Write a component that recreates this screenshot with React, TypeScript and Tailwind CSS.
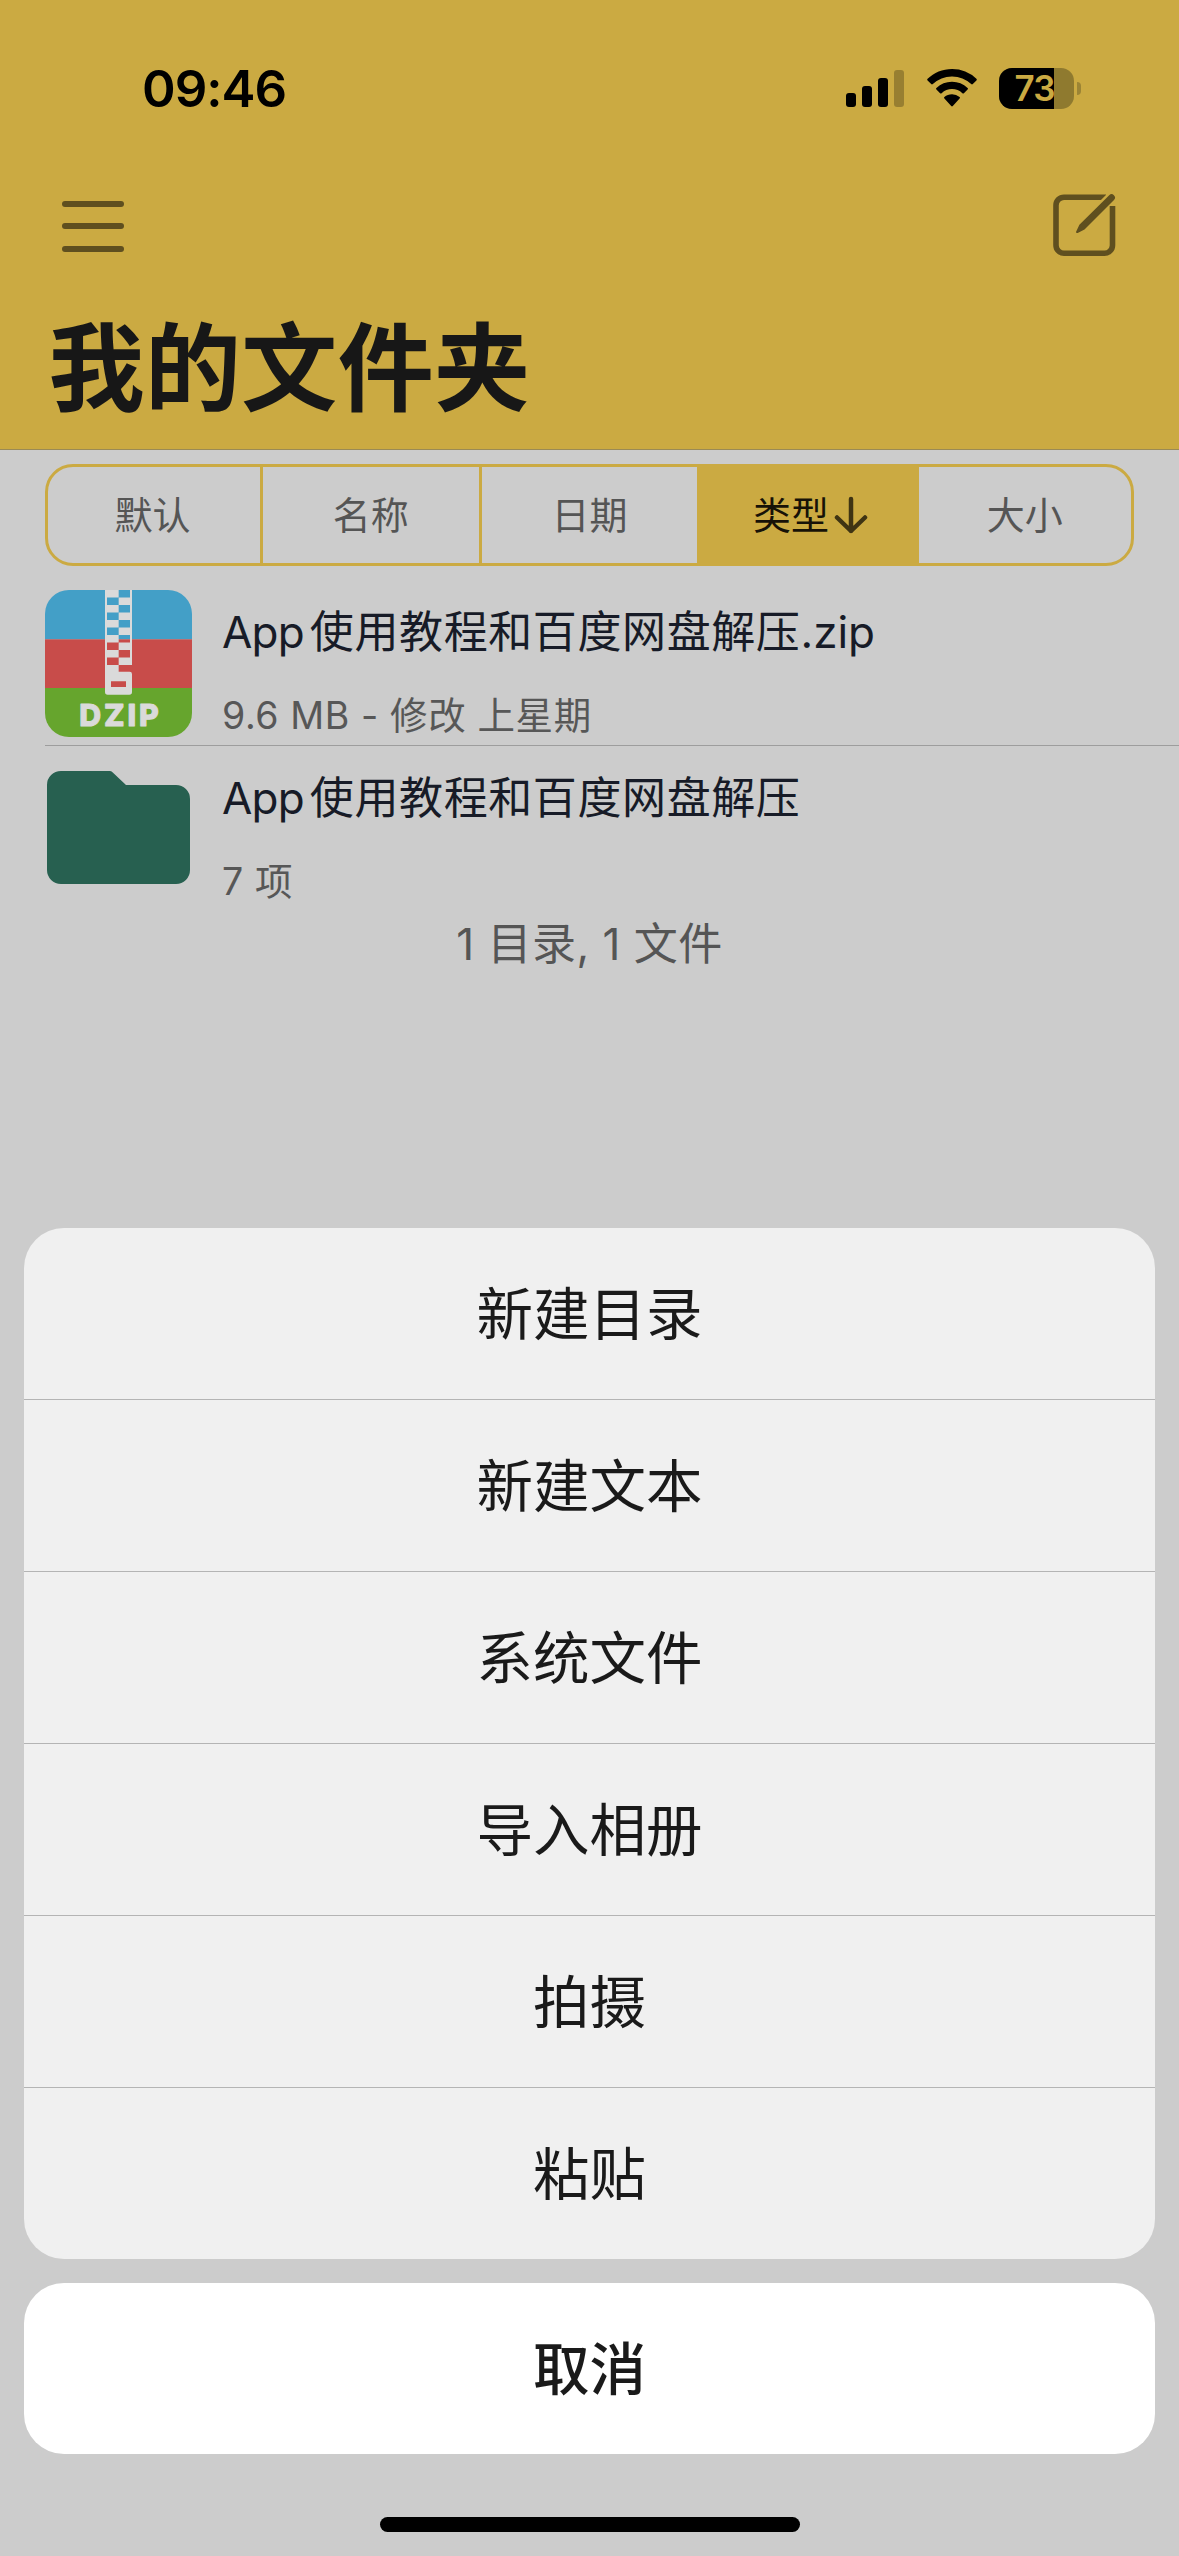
import clsx from "clsx";

const SORT_TABS = [
  { label: "默认", active: false },
  { label: "名称", active: false },
  { label: "日期", active: false },
  { label: "类型", active: true },
  { label: "大小", active: false },
];

const ACTIONS = [
  "新建目录",
  "新建文本",
  "系统文件",
  "导入相册",
  "拍摄",
  "粘贴",
];

function SignalIcon() {
  return (
    <svg width="58" height="37" viewBox="0 0 58 37">
      <rect x="0" y="23" width="10" height="14" rx="3" />
      <rect x="16" y="16" width="10" height="21" rx="3" />
      <rect x="32" y="8" width="10" height="29" rx="3" />
      <rect x="48" y="0" width="10" height="37" rx="3" fillOpacity="0.25" />
    </svg>
  );
}

function WifiIcon() {
  return (
    <svg width="50" height="38" viewBox="0 0 50 38">
      <path d="M25 0C15.600 0 7 3.700 .6 9.800a1.100 1.100 0 0 0 0 1.600l3.600 3.700a1.100 1.100 0 0 0 1.600 0A27.600 27.600 0 0 1 25 7.400a27.600 27.600 0 0 1 19.200 7.700 1.100 1.100 0 0 0 1.600 0l3.600-3.700a1.100 1.100 0 0 0 0-1.600A35.200 35.200 0 0 0 25 0Z" />
      <path d="M25 12.700a22.600 22.600 0 0 0-15.600 6.200 1.100 1.100 0 0 0 0 1.600l3.700 3.700a1.100 1.100 0 0 0 1.500 0 15.200 15.200 0 0 1 20.800 0 1.100 1.100 0 0 0 1.500 0l3.700-3.700a1.100 1.100 0 0 0 0-1.600A22.600 22.600 0 0 0 25 12.700Z" />
      <path d="M25 25.200c-2.900 0-5.500 1-7.600 2.700a1 1 0 0 0 0 1.500l6.800 7.600a1.100 1.100 0 0 0 1.600 0l6.800-7.600a1 1 0 0 0 0-1.500 12 12 0 0 0-7.600-2.700Z" />
    </svg>
  );
}

function Battery() {
  return (
    <div className="flex items-center gap-[3px]">
      <div className="relative flex h-[41px] w-[75px] items-center justify-center overflow-hidden rounded-[13px] bg-[#8f7a2f] pr-[4px]">
        <div className="absolute inset-y-0 left-0 w-[55px] bg-black" />
        <span className="relative text-[35px] leading-none font-semibold tracking-[-1px] text-[#cbaa42]">
          73
        </span>
      </div>
      <div className="h-[13px] w-[4px] rounded-r-full bg-[#9b8435]" />
    </div>
  );
}

function ComposeIcon() {
  return (
    <svg width="64" height="64" viewBox="0 0 64 64" fill="none">
      <path
        d="M53 3.200H11a8 8 0 0 0-8 8v40a8 8 0 0 0 8 8h40.500a8 8 0 0 0 8-8V12"
        stroke="#5f4f1f"
        strokeWidth="5.600"
      />
      <path d="M63 -2 47 14" stroke="#cbaa42" strokeWidth="10" />
      <path
        d="M56.200 1.300a3.300 3.300 0 0 1 4.800 4.600L31.500 35.500l-6.800 3.400a1.100 1.100 0 0 1-1.500-1.500l3.200-6.700Z"
        fill="#5f4f1f"
      />
    </svg>
  );
}

function ZipIcon() {
  return (
    <svg
      width="147"
      height="147"
      viewBox="0 0 441 441"
      className="rounded-[24px]"
    >
      <rect width="441" height="148" fill="#439fc7" />
      <rect y="148" width="441" height="146" fill="#c84c4a" />
      <rect y="294" width="441" height="147" fill="#66a52d" />
      <g fill="#dadada">
        {/*Rails*/}
        <rect x="180" width="6" height="260" />
        <rect x="255" width="6" height="225" />
        {/*Teeth*/}
        {[0, 2, 4, 6, 8, 10].map((row) => (
          <rect key={row} x="180" y={row * 22.5} width="41" height="22.500" />
        ))}
        {[1, 3, 5, 7, 9].map((row) => (
          <rect key={row} x="221" y={row * 22.5} width="40" height="22.500" />
        ))}
        {/*Slider*/}
        <path
          fillRule="evenodd"
          d="M180 245h74a7 7 0 0 1 7 7v54a8 8 0 0 1-8 8h-65a8 8 0 0 1-8-8Zm18 29v17h45v-17Z"
        />
        <text
          x="103"
          y="409"
          fontSize="91"
          fontWeight="800"
          textLength="238"
          stroke="#dadada"
          strokeWidth="3"
          strokeLinejoin="round"
          className="font-['Inter']"
        >
          DZIP
        </text>
      </g>
    </svg>
  );
}

function FolderIcon() {
  return (
    <svg width="147" height="147" viewBox="0 0 147 147">
      <path
        d="M16 15h48.500a4 4 0 0 1 3 1.200L81 29h50a14 14 0 0 1 14 14v71a14 14 0 0 1-14 14H16a14 14 0 0 1-14-14V29a14 14 0 0 1 14-14Z"
        fill="#276050"
      />
    </svg>
  );
}

function FileRow({
  icon,
  name,
  suffix,
  detail,
}: {
  icon: React.ReactNode;
  name: string;
  suffix?: string;
  detail: string;
}) {
  return (
    <div className="flex h-[165px] gap-x-[30px]">
      <div className="flex h-[147px] w-[147px] pt-[10px]">{icon}</div>
      <div className="flex flex-col whitespace-pre">
        <div className="mt-[22px] h-[60px] text-[44px] leading-[60px] text-[#171b27]">
          <span className="tracking-[-0.8px]">App</span>
          <span className="ml-[6px] tracking-[0.6px]">{name}</span>
          {suffix}
        </div>
        <div className="mt-[29px] h-[50px] text-[37.500px] leading-[50px] tracking-[0.6px] text-[#575757]">
          {detail}
        </div>
      </div>
    </div>
  );
}

function ActionSheet() {
  return (
    <div className="absolute inset-x-[24px] top-[1228px] text-[56.500px] text-[#1a1a1a]">
      <div className="overflow-hidden rounded-[40px] bg-[#f0f0f0]">
        {ACTIONS.map((action) => (
          <button
            key={action}
            className="flex h-[172px] w-full items-center justify-center border-b border-[#b4b4b4] pt-[4px] last:h-[171px] last:border-b-0"
          >
            {action}
          </button>
        ))}
      </div>
      <button className="mt-[24px] flex h-[171px] w-full items-center justify-center rounded-[40px] bg-white pt-[4px] font-medium">
        取消
      </button>
      <div className="mx-auto mt-[63px] h-[15px] w-[420px] rounded-full bg-black" />
    </div>
  );
}

export default function App() {
  return (
    <div className="relative h-[2556px] w-[1179px] overflow-hidden bg-[#cccccc] font-['Inter','Noto_Sans_CJK_SC',sans-serif]">
      <header className="flex h-[450px] flex-col border-b border-[#9a8a55] bg-[#cbaa42]">
        {/*Status bar*/}
        <div className="flex h-[176px] items-center justify-between pr-[98px] pl-[142px]">
          <span className="text-[51px] leading-none font-semibold tracking-[-1px]">
            09:46
          </span>
          <div className="flex items-center gap-[22px]">
            <div className="mr-px">
              <SignalIcon />
            </div>
            <WifiIcon />
            <Battery />
          </div>
        </div>

        {/*Toolbar*/}
        <div className="flex h-[100px] items-center justify-between pr-[62px] pl-[62px]">
          <div className="flex flex-col gap-[16.500px]">
            <span className="h-[6px] w-[62px] rounded-full bg-[#5f4f1f]" />
            <span className="h-[6px] w-[62px] rounded-full bg-[#5f4f1f]" />
            <span className="h-[6px] w-[62px] rounded-full bg-[#5f4f1f]" />
          </div>
          <ComposeIcon />
        </div>

        <h1 className="mt-[22px] pl-[48.500px] text-[96px] leading-[140px] font-bold tracking-[0.4px] text-[#171717]">
          我的文件夹
        </h1>
      </header>

      {/*Sort tabs*/}
      <div className="mx-[45px] mt-[14px] flex h-[102px] overflow-hidden rounded-[28px] border-[3px] border-[#cbaa42]">
        {SORT_TABS.map(({ label, active }, i) => (
          <div
            key={label}
            className={clsx(
              "flex shrink-0 items-center justify-center text-[38px]",
              i === 0 ? "w-[212px] pr-[3px]" : "border-l-[3px] border-[#cbaa42]",
              i > 0 && (i < 4 ? "w-[218.600px]" : "w-[215px]"),
              active ? "bg-[#cbaa42] pl-[6px] text-[#171207]" : "text-[#555555]"
            )}
          >
            {label}
            {active && (
              <svg
                width="36"
                height="40"
                viewBox="0 0 36 40"
                fill="none"
                stroke="#3f3413"
                strokeWidth="4.500"
                strokeLinecap="round"
                strokeLinejoin="round"
                className="ml-[4px]"
              >
                <path d="M18 4v32M4 22.500 18 36l14-13.500" />
              </svg>
            )}
          </div>
        ))}
      </div>

      {/*Files*/}
      <div className="mt-[14px] pl-[45px]">
        <div className="border-b border-[#9d9d9d]">
          <FileRow
            icon={<ZipIcon />}
            name="使用教程和百度网盘解压"
            suffix=".zip"
            detail="9.6 MB - 修改 上星期"
          />
        </div>
        <FileRow
          icon={<FolderIcon />}
          name="使用教程和百度网盘解压"
          detail="7 项"
        />
      </div>
      <p className="pt-[3px] text-center text-[44px] leading-[60px] tracking-[0.5px] text-[#555555]">
        1 目录, 1 文件
      </p>

      <ActionSheet />
    </div>
  );
}
